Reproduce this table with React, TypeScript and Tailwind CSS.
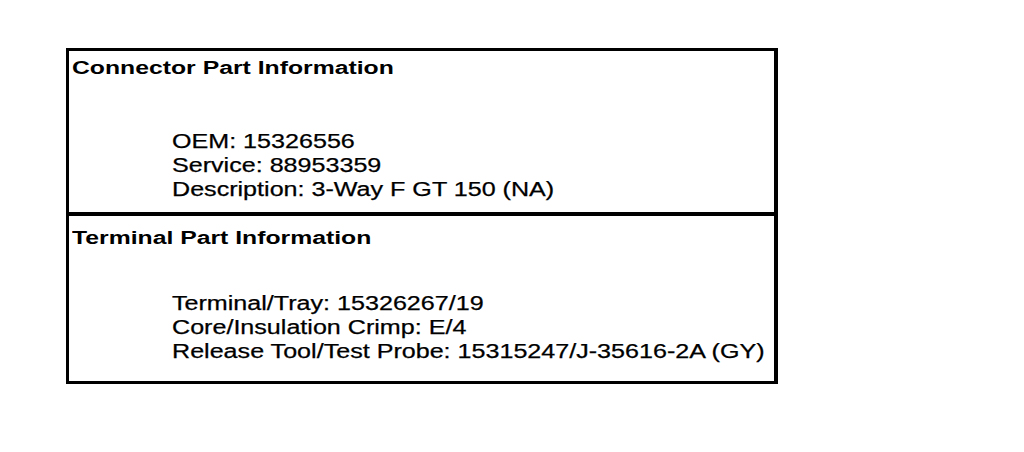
import React from "react";

const Heading = ({ children }: { children: React.ReactNode }) => (
  <div className="h-[25px] leading-[25px] whitespace-nowrap">
    <span className="inline-block origin-left scale-x-[1.375] text-[18px] leading-[25px] font-bold text-black">
      {children}
    </span>
  </div>
);

const Line = ({ children }: { children: React.ReactNode }) => (
  <div className="h-[24px] leading-[24px] whitespace-nowrap">
    <span className="inline-block origin-left scale-x-[1.255] text-[20px] leading-[24px] font-normal text-black [-webkit-text-stroke:0.25px_black]">
      {children}
    </span>
  </div>
);

export default function App() {
  return (
    <div
      className="w-[1024px] h-[452px] bg-white pt-[48px] pl-[66px]"
      style={{ fontFamily: '"Liberation Sans", Arial, sans-serif' }}
    >
      <div className="w-[712px] border-[3px] border-r-4 border-black flex flex-col">
        <section className="pt-[5px] pb-[11px] pl-[3px]">
          <Heading>Connector Part Information</Heading>
          <div className="pl-[100px] pt-[48px]">
            <Line>OEM: 15326556</Line>
            <Line>Service: 88953359</Line>
            <Line>Description: 3-Way F GT 150 (NA)</Line>
          </div>
        </section>
        <div className="h-[4px] bg-black" />
        <section className="pt-[10px] pb-[18px] pl-[3px]">
          <Heading>Terminal Part Information</Heading>
          <div className="pl-[100px] pt-[40px]">
            <Line>Terminal/Tray: 15326267/19</Line>
            <Line>Core/Insulation Crimp: E/4</Line>
            <Line>Release Tool/Test Probe: 15315247/J-35616-2A (GY)</Line>
          </div>
        </section>
      </div>
    </div>
  );
}
